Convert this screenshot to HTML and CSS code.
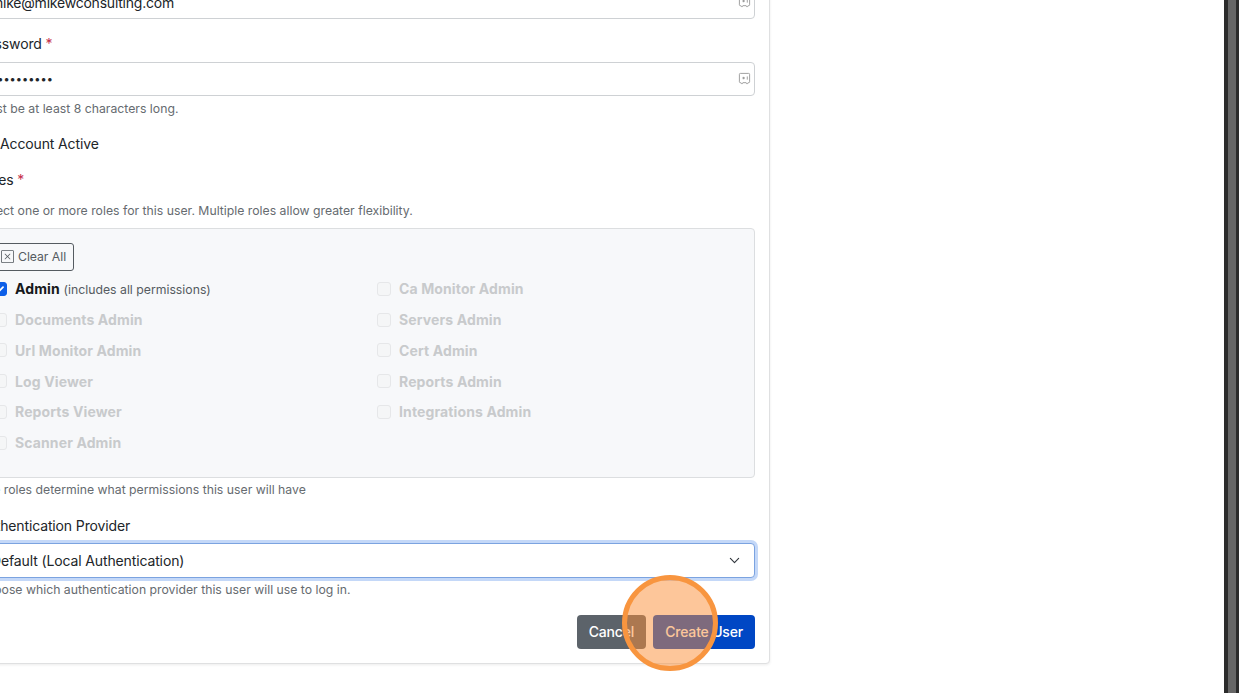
FILE: index.html
```html
<!DOCTYPE html>
<html lang="en">
<head>
    <meta charset="UTF-8">
    <meta name="viewport" content="width=device-width, initial-scale=1.0">
    <title>Create User</title>
    <link rel="stylesheet" href="styles.css">
</head>
<body>
    <main class="page">
        <form class="card">
            <div class="field">
                <label class="form-label">Email <span class="req">*</span></label>
                <div class="input-wrap">
                    <input type="text" class="form-control" value="mike@mikewconsulting.com">
                    <svg class="key-icon" viewBox="0 0 14 14"><path d="M2.5 1.5h9a1 1 0 0 1 1 1v8a1 1 0 0 1-1 1h-.7l-.4 1h-1.2l-.4-1H5.2l-.4 1H3.6l-.4-1h-.7a1 1 0 0 1-1-1v-8a1 1 0 0 1 1-1z"/><path d="M6 5.2v2.6M4.9 5.9l2.2 1.2M7.1 5.9L4.9 7.1M10 4.8v3.4"/></svg>
                </div>
            </div>

            <div class="field">
                <label class="form-label">Password <span class="req">*</span></label>
                <div class="input-wrap">
                    <input type="password" class="form-control form-password" value="password12">
                    <svg class="key-icon" viewBox="0 0 14 14"><path d="M2.5 1.5h9a1 1 0 0 1 1 1v8a1 1 0 0 1-1 1h-.7l-.4 1h-1.2l-.4-1H5.2l-.4 1H3.6l-.4-1h-.7a1 1 0 0 1-1-1v-8a1 1 0 0 1 1-1z"/><path d="M6 5.2v2.6M4.9 5.9l2.2 1.2M7.1 5.9L4.9 7.1M10 4.8v3.4"/></svg>
                </div>
                <div class="form-text">Must be at least 8 characters long.</div>
            </div>

            <div class="field">
                <label class="check-line">
                    <input type="checkbox" class="check" checked>
                    <span>Account Active</span>
                </label>
            </div>

            <div class="roles">
                <label class="roles-label">Roles <span class="req">*</span></label>
                <div class="form-text roles-intro">Select one or more roles for this user. Multiple roles allow greater flexibility.</div>
                <div class="roles-panel">
                    <button type="button" class="btn-clear">
                        <svg class="x-icon" viewBox="0 0 16 16"><path d="M14 1a1 1 0 0 1 1 1v12a1 1 0 0 1-1 1H2a1 1 0 0 1-1-1V2a1 1 0 0 1 1-1zM2 0a2 2 0 0 0-2 2v12a2 2 0 0 0 2 2h12a2 2 0 0 0 2-2V2a2 2 0 0 0-2-2z"/><path d="M4.646 4.646a.5.5 0 0 1 .708 0L8 7.293l2.646-2.647a.5.5 0 0 1 .708.708L8.707 8l2.647 2.646a.5.5 0 0 1-.708.708L8 8.707l-2.646 2.647a.5.5 0 0 1-.708-.708L7.293 8 4.646 5.354a.5.5 0 0 1 0-.708"/></svg>
                        Clear All
                    </button>
                    <div class="roles-grid">
                        <label class="role">
                            <input type="checkbox" class="check" checked>
                            <span><strong>Admin</strong> <small>(includes all permissions)</small></span>
                        </label>
                        <label class="role off"><input type="checkbox" class="check" disabled><span>Ca Monitor Admin</span></label>
                        <label class="role off"><input type="checkbox" class="check" disabled><span>Documents Admin</span></label>
                        <label class="role off"><input type="checkbox" class="check" disabled><span>Servers Admin</span></label>
                        <label class="role off"><input type="checkbox" class="check" disabled><span>Url Monitor Admin</span></label>
                        <label class="role off"><input type="checkbox" class="check" disabled><span>Cert Admin</span></label>
                        <label class="role off"><input type="checkbox" class="check" disabled><span>Log Viewer</span></label>
                        <label class="role off"><input type="checkbox" class="check" disabled><span>Reports Admin</span></label>
                        <label class="role off"><input type="checkbox" class="check" disabled><span>Reports Viewer</span></label>
                        <label class="role off"><input type="checkbox" class="check" disabled><span>Integrations Admin</span></label>
                        <label class="role off"><input type="checkbox" class="check" disabled><span>Scanner Admin</span></label>
                    </div>
                </div>
                <div class="form-text roles-note">The roles determine what permissions this user will have</div>
            </div>

            <div class="field">
                <label class="form-label form-label-tight">Authentication Provider</label>
                <select class="form-select">
                    <option>Default (Local Authentication)</option>
                </select>
                <div class="form-text select-help">Choose which authentication provider this user will use to log in.</div>
            </div>

            <div class="actions">
                <button type="button" class="btn btn-cancel">Cancel</button>
                <button type="button" class="btn btn-create">Create User</button>
            </div>

            <!-- Click highlight from the screen recording -->
            <div class="click-spot"></div>
        </form>
    </main>
    <div class="scrollbar"></div>
</body>
</html>
```

FILE: styles.css
```css
* {
    margin: 0;
    padding: 0;
    box-sizing: border-box;
}

html, body {
    height: 100%;
    overflow: hidden;
}

body {
    display: flex;
    font-family: Inter, "Noto Sans", sans-serif;
    font-size: 14px;
    line-height: 21px;
    letter-spacing: -0.13px;
    color: #212529;
    background: #fff;
}

.page {
    flex: 1;
    min-width: 0;
    overflow: hidden;
}

/* Window edge on the right of the capture */
.scrollbar {
    width: 15px;
    flex-shrink: 0;
    background: #666;
    border-left: 4px solid #2b2b2b;
    border-right: 3px solid #2b2b2b;
}

/* The card runs off the top and left of the capture */
.card {
    position: relative;
    width: 807px;
    margin: -57px 0 0 -37px;
    padding: 14px;
    background: #fff;
    border: 1px solid #dfe0e1;
    border-radius: 4px;
    box-shadow: 0 1px 3px rgba(0, 0, 0, 0.08);
}

.field {
    margin-bottom: 16px;
}

.form-label {
    display: block;
    margin-top: -2px;
    margin-bottom: 8px;
}

.form-label-tight {
    margin-bottom: 7px;
}

.req {
    color: #c5304a;
}

.input-wrap {
    position: relative;
}

.form-control {
    display: block;
    width: 100%;
    height: 34px;
    padding: 0 12px;
    font: inherit;
    letter-spacing: -0.22px;
    color: #212529;
    border: 1px solid #ced1d4;
    border-radius: 4px;
    outline: none;
}

.form-password {
    font-size: 11px;
    letter-spacing: 0;
}

.key-icon {
    position: absolute;
    top: 10px;
    right: 4px;
    width: 13px;
    height: 13px;
    fill: none;
    stroke: #999;
    stroke-width: 1;
}

.form-text {
    position: relative;
    top: 1px;
    margin-top: 3px;
    font-size: 12.25px;
    line-height: 18px;
    letter-spacing: 0;
    color: #666b70;
}

.select-help {
    margin-top: 2px;
}

.check-line {
    display: flex;
    align-items: center;
    gap: 8px;
}

.check {
    appearance: none;
    width: 14px;
    height: 14px;
    flex-shrink: 0;
    background: #fff;
    border: 1px solid #ced1d4;
    border-radius: 3px;
}

.check:checked {
    background: #0d5fe8 url("data:image/svg+xml,%3csvg xmlns='http://www.w3.org/2000/svg' viewBox='0 0 20 20'%3e%3cpath fill='none' stroke='%23fff' stroke-linecap='round' stroke-linejoin='round' stroke-width='3' d='m6 10 3 3 6-6'/%3e%3c/svg%3e") center/100% no-repeat;
    border-color: #0d5fe8;
}

.check:disabled {
    background: #f5f6f7;
    border-color: #e6e7e9;
}

.roles-label {
    display: block;
    margin-top: -1px;
    margin-bottom: 11px;
}

.roles-intro {
    margin-top: 0;
    margin-bottom: 9px;
}

.roles-panel {
    padding: 14px;
    background: #f7f8fa;
    border: 1px solid #dcdee0;
    border-radius: 4px;
}

.btn-clear {
    display: flex;
    align-items: center;
    gap: 4px;
    height: 28px;
    padding: 0 7px 2px;
    font: inherit;
    font-size: 12.25px;
    letter-spacing: -0.05px;
    color: #555b61;
    background: transparent;
    border: 1px solid #555b61;
    border-radius: 3px;
}

.x-icon {
    width: 13px;
    height: 13px;
    fill: currentColor;
}

.roles-grid {
    display: grid;
    grid-template-columns: 1fr 1fr;
    column-gap: 21px;
    row-gap: 9.75px;
    margin-top: 7.25px;
    margin-bottom: 10px;
}

.role {
    display: flex;
    align-items: center;
    gap: 8px;
    height: 21px;
}

.role strong {
    font-weight: 700;
    letter-spacing: 0.1px;
    color: #16181b;
}

.role small {
    font-size: 12.25px;
    letter-spacing: 0;
    color: #555b61;
}

.role.off {
    font-weight: 700;
    letter-spacing: 0.12px;
    color: #c8cacc;
}

.roles-note {
    margin-top: 2px;
    margin-bottom: 19px;
}

.form-select {
    display: block;
    width: 100%;
    height: 35px;
    padding: 0 36px 0 12px;
    font: inherit;
    letter-spacing: -0.13px;
    color: #212529;
    appearance: none;
    background: #fff url("data:image/svg+xml,%3csvg xmlns='http://www.w3.org/2000/svg' viewBox='0 0 16 16'%3e%3cpath fill='none' stroke='%23343a40' stroke-linecap='round' stroke-linejoin='round' stroke-width='1.7' d='m2 5 6 6 6-6'/%3e%3c/svg%3e") right 14px center/11px no-repeat;
    border: 1px solid #7ba3e0;
    border-radius: 4px;
    box-shadow: 0 0 0 3px #c4d8f8;
    outline: none;
}

.actions {
    display: flex;
    justify-content: flex-end;
    gap: 7px;
    margin-top: 17px;
}

.btn {
    height: 34px;
    padding: 0 12px 1px;
    font: inherit;
    font-weight: 500;
    letter-spacing: -0.18px;
    color: #fff;
    border: none;
    border-radius: 4px;
}

.btn-cancel {
    background: #5c636a;
}

.btn-create {
    background: #0047c4;
}

.click-spot {
    position: absolute;
    left: 658px;
    top: 631px;
    width: 96px;
    height: 96px;
    background: rgba(251, 142, 53, 0.5);
    border: 5px solid #f8953f;
    border-radius: 50%;
}
```
